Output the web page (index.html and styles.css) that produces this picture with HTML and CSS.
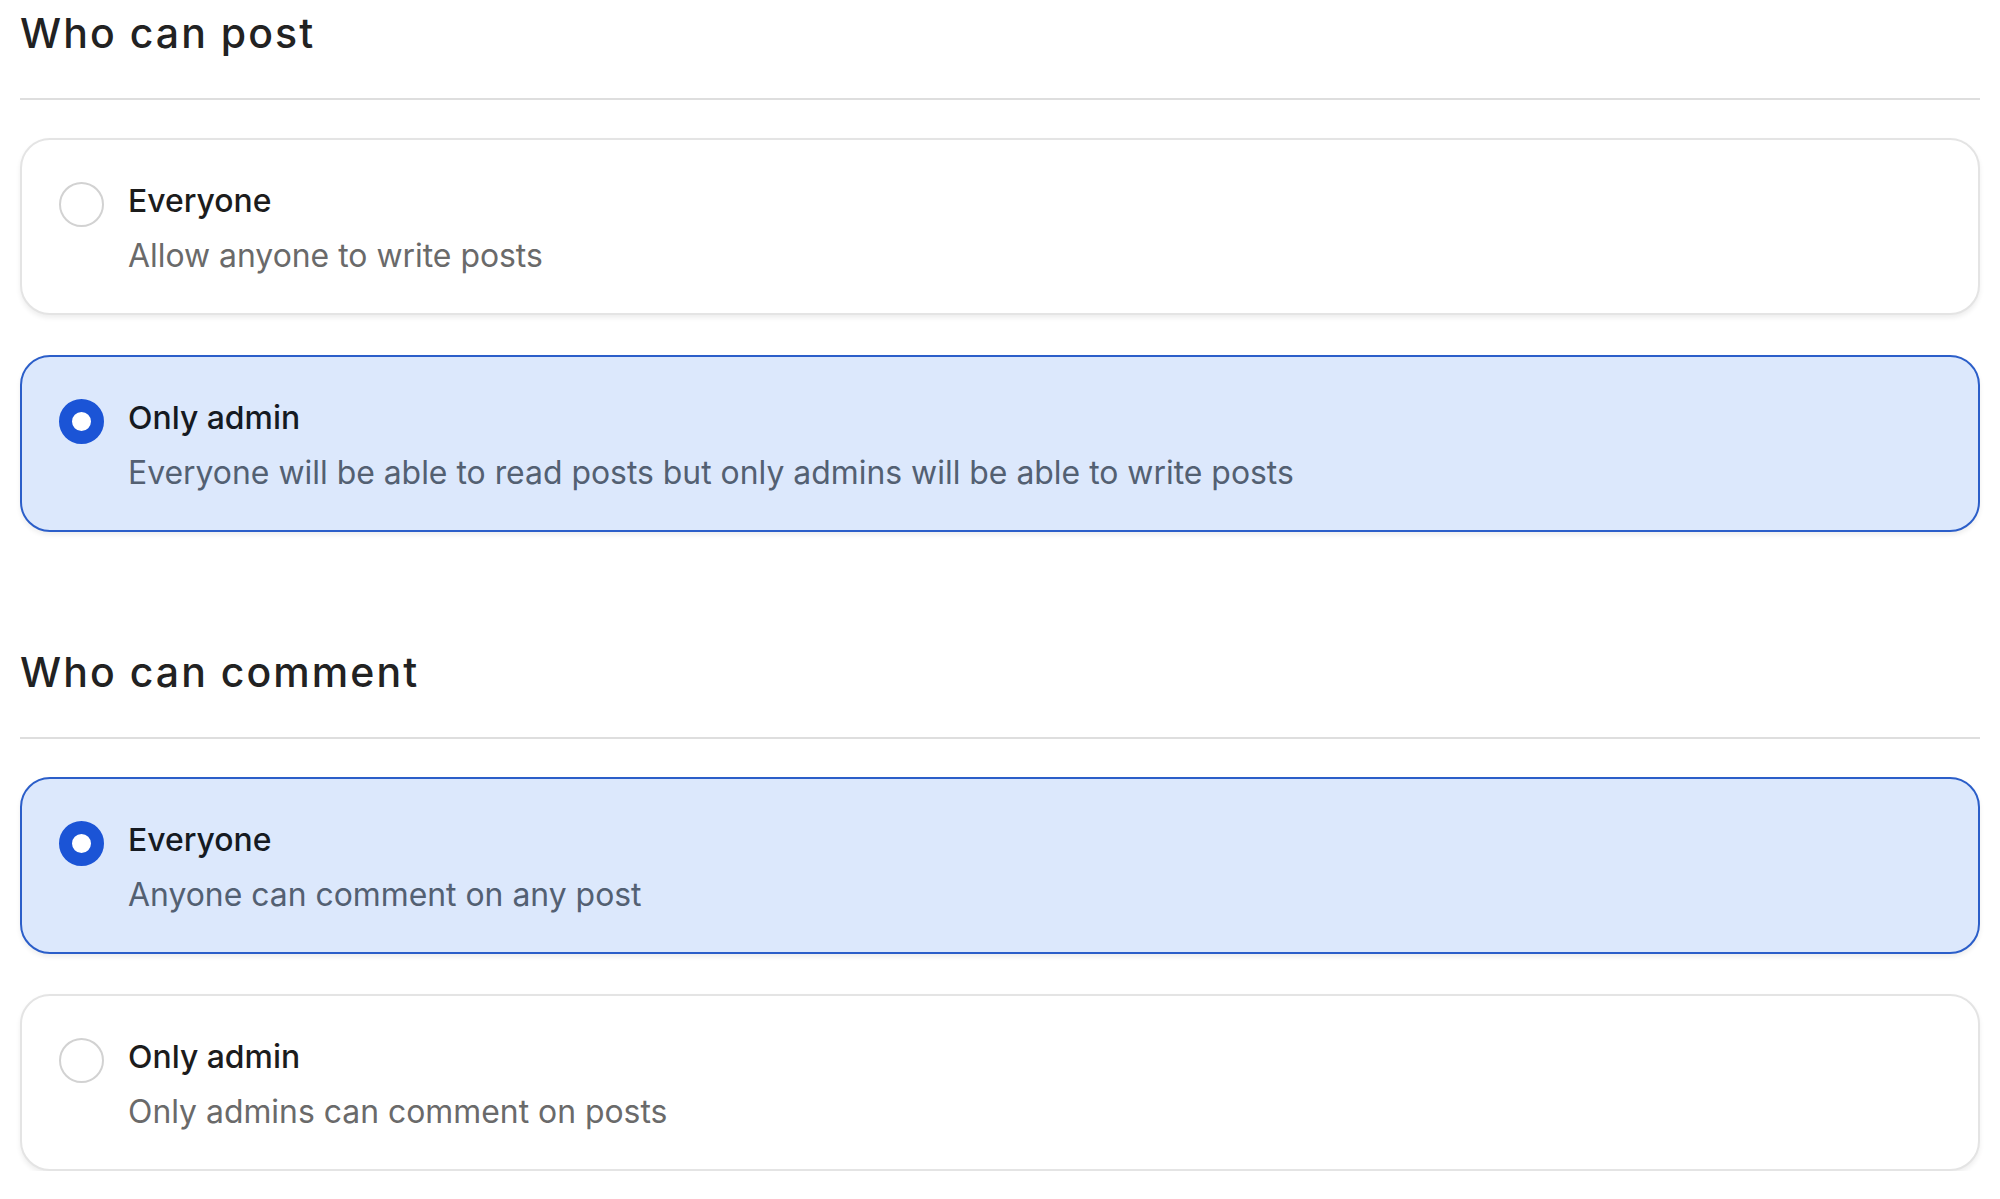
FILE: index.html
```html
<!DOCTYPE html>
<html lang="en">
<head>
<meta charset="utf-8">
<title>Permissions</title>
<link rel="stylesheet" href="styles.css">
</head>
<body>
<main class="page">
  <section class="section">
    <h2 class="section-title">Who can post</h2>
    <div class="options">
      <label class="option">
        <span class="radio"></span>
        <span class="option-text">
          <span class="option-title">Everyone</span>
          <span class="option-desc">Allow anyone to write posts</span>
        </span>
      </label>
      <label class="option option-selected">
        <span class="radio radio-on"></span>
        <span class="option-text">
          <span class="option-title">Only admin</span>
          <span class="option-desc">Everyone will be able to read posts but only admins will be able to write posts</span>
        </span>
      </label>
    </div>
  </section>
  <section class="section">
    <h2 class="section-title">Who can comment</h2>
    <div class="options">
      <label class="option option-selected">
        <span class="radio radio-on"></span>
        <span class="option-text">
          <span class="option-title">Everyone</span>
          <span class="option-desc">Anyone can comment on any post</span>
        </span>
      </label>
      <label class="option">
        <span class="radio"></span>
        <span class="option-text">
          <span class="option-title">Only admin</span>
          <span class="option-desc">Only admins can comment on posts</span>
        </span>
      </label>
    </div>
  </section>
</main>
</body>
</html>
```
FILE: styles.css
```css
html, body {
  margin: 0;
  padding: 0;
  background: #ffffff;
}

body {
  font-family: Inter, "Noto Sans", "Liberation Sans", sans-serif;
  color: #1f1f1f;
}

.page {
  display: flex;
  flex-direction: column;
  gap: 115px;
  padding: 8px 20px 0 20px;
}

.section {
  display: flex;
  flex-direction: column;
}

.section-title {
  margin: 0;
  font-size: 41px;
  line-height: 50px;
  font-weight: 450;
  letter-spacing: 0.05em;
  color: #222222;
  padding-bottom: 40px;
  border-bottom: 2px solid #dedede;
}

.options {
  display: flex;
  flex-direction: column;
  gap: 40px;
  margin-top: 38px;
}

.option {
  display: flex;
  align-items: flex-start;
  gap: 24px;
  padding: 33px 37px 30px 37px;
  border: 2px solid #e4e4e4;
  border-radius: 30px;
  background: #ffffff;
  box-shadow: 0 3px 5px rgba(0, 0, 0, 0.07);
}

.option-selected {
  background: #dce8fc;
  border-color: #2b5ec9;
}

.radio {
  flex: none;
  box-sizing: border-box;
  width: 45px;
  height: 45px;
  margin-top: 9px;
  border-radius: 50%;
  border: 2px solid #d2d2d2;
  background: #ffffff;
}

.radio-on {
  border: 13px solid #1b54d6;
}

.option-text {
  display: flex;
  flex-direction: column;
}

.option-title {
  font-size: 31.9px;
  line-height: 55px;
  font-weight: 500;
  color: #1c1c1c;
}

.option-desc {
  font-size: 31.9px;
  line-height: 55px;
  font-weight: 400;
  color: #6a6a6a;
}

.option-selected .option-title {
  color: #151a22;
}

.option-selected .option-desc {
  color: #536072;
}
```
